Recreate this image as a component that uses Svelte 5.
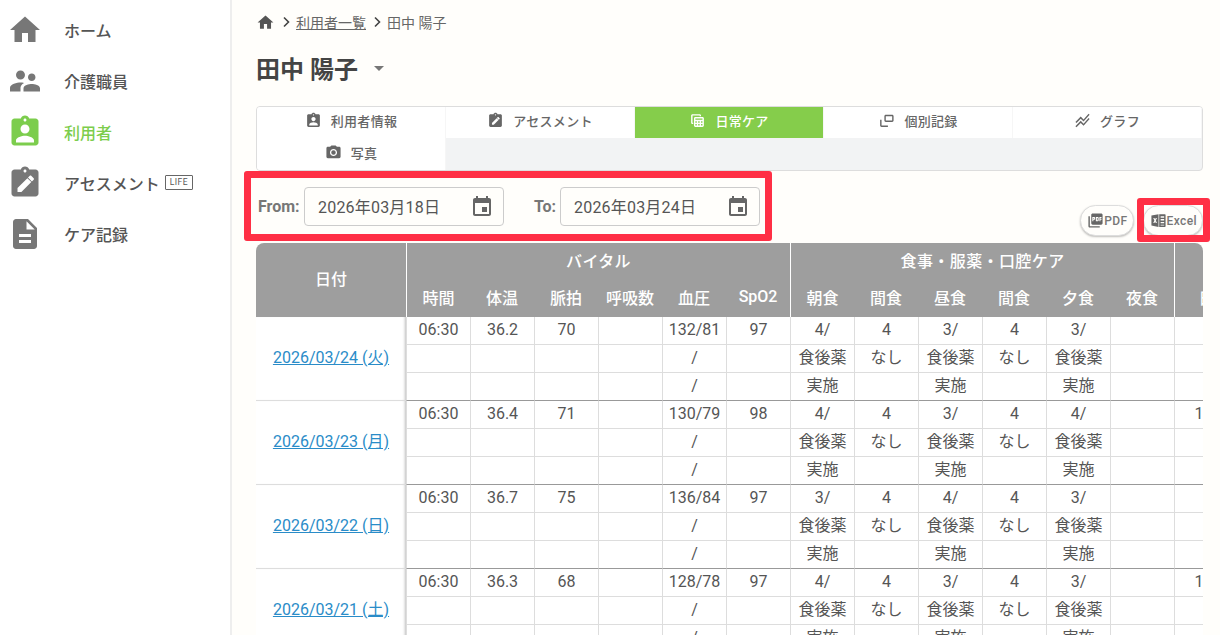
<script>
  const icons = {
    home: 'M10 20v-6h4v6h5v-8h3L12 3 2 12h3v8z',
    staff: 'M16.5 12c1.38 0 2.49-1.12 2.49-2.5S17.88 7 16.5 7C15.12 7 14 8.12 14 9.5s1.12 2.5 2.5 2.5zM9 11c1.66 0 2.99-1.34 2.99-3S10.66 5 9 5C7.34 5 6 6.34 6 8s1.34 3 3 3zm7.5 3c-1.83 0-5.5.92-5.5 2.75V19h11v-2.25c0-1.83-3.67-2.75-5.5-2.75zM9 13c-2.33 0-7 1.17-7 3.5V19h7v-2.25c0-.85.33-2.34 2.37-3.47C10.5 13.1 9.66 13 9 13z',
    user: 'M19 3h-4.18C14.4 1.84 13.3 1 12 1c-1.3 0-2.4.84-2.82 2H5c-1.1 0-2 .9-2 2v14c0 1.1.9 2 2 2h14c1.1 0 2-.9 2-2V5c0-1.1-.9-2-2-2zm-7 0c.55 0 1 .45 1 1s-.45 1-1 1-1-.45-1-1 .45-1 1-1zm0 4c1.66 0 3 1.34 3 3s-1.34 3-3 3-3-1.34-3-3 1.34-3 3-3zm6 12H6v-1.4c0-2 4-3.1 6-3.1s6 1.1 6 3.1V19z',
    assess: 'M19 3h-4.18C14.4 1.84 13.3 1 12 1s-2.4.84-2.82 2H5c-1.1 0-2 .9-2 2v14c0 1.1.9 2 2 2h14c1.1 0 2-.9 2-2V5c0-1.1-.9-2-2-2zm-7 0c.55 0 1 .45 1 1s-.45 1-1 1-1-.45-1-1 .45-1 1-1zM7 18v-2.6l6.6-6.6 2.6 2.6L9.6 18H7zm10.8-8.2-1.2 1.2-2.6-2.6 1.2-1.2c.26-.26.68-.26.94 0l1.66 1.66c.26.26.26.68 0 .94z',
    care: 'M14 2H6c-1.1 0-1.99.9-1.99 2L4 20c0 1.1.89 2 1.99 2H18c1.1 0 2-.9 2-2V8l-6-6zm2 16H8v-2h8v2zm0-4H8v-2h8v2zm-3-5V3.5L18.5 9H13z',
    event: 'M17 12h-5v5h5v-5zM16 1v2H8V1H6v2H5c-1.11 0-1.99.9-1.99 2L3 19c0 1.1.89 2 2 2h14c1.1 0 2-.9 2-2V5c0-1.1-.9-2-2-2h-1V1h-2zm3 18H5V8h14v11z',
    daily: 'M19 7H9c-1.1 0-2 .9-2 2v10c0 1.1.9 2 2 2h10c1.1 0 2-.9 2-2V9c0-1.1-.9-2-2-2zm0 2v2H9V9h10zm-6 6v-2h2v2h-2zm2 2v2h-2v-2h2zm-4-2H9v-2h2v2zm6-2h2v2h-2v-2zm-8 4h2v2H9v-2zm8 2v-2h2v2h-2zM6 17H5c-1.1 0-2-.9-2-2V5c0-1.1.9-2 2-2h10c1.1 0 2 .9 2 2v1h-2V5H5v10h1v2z',
    record: 'M11 4h9c1.1 0 2 .9 2 2v6c0 1.1-.9 2-2 2h-9c-1.1 0-2-.9-2-2V6c0-1.1.9-2 2-2zm0 2v6h9V6h-9zM3 11h2v8h9v2H5c-1.1 0-2-.9-2-2v-8z',
    graph: 'M2 19.99l7.5-7.51 4 4 7.09-7.97L22 9.92l-8.5 9.56-4-4-6 6.01-1.5-1.5zm1.5-4.5l6-6.01 4 4L22 3.92l-1.41-1.41-7.09 7.97-4-4L2 13.99l1.5 1.5z',
    photo: 'M9 2L7.17 4H4c-1.1 0-2 .9-2 2v12c0 1.1.9 2 2 2h16c1.1 0 2-.9 2-2V6c0-1.1-.9-2-2-2h-3.17L15 2H9zm3 15c-2.76 0-5-2.24-5-5s2.24-5 5-5 5 2.24 5 5-2.24 5-5 5zm0-8.2a3.2 3.2 0 1 0 0 6.4 3.2 3.2 0 0 0 0-6.4z',
    pdf: 'M20 2H8c-1.1 0-2 .9-2 2v12c0 1.1.9 2 2 2h12c1.1 0 2-.9 2-2V4c0-1.1-.9-2-2-2zm-8.5 7.5c0 .83-.67 1.5-1.5 1.5H9v2H7.5V7H10c.83 0 1.5.67 1.5 1.5v1zm5 2c0 .83-.67 1.5-1.5 1.5h-2.5V7H15c.83 0 1.5.67 1.5 1.5v3zm4-3H19v1h1.5V11H19v2h-1.5V7h3v1.5zM9 9.5h1v-1H9v1zM4 6H2v14c0 1.1.9 2 2 2h14v-2H4V6zm10 5.5h1v-3h-1v3z',
    excel: 'M13 3h8c.55 0 1 .45 1 1v16c0 .55-.45 1-1 1h-8V3zm2 3v2h5V6h-5zm0 4v2h5v-2h-5zm0 4v2h5v-2h-5zm0 4v1h5v-1h-5zM2 5l10-2v18L2 19V5zm2.6 3.4L6.2 12l-1.6 3.6h1.7l.9-2.3.9 2.3h1.7L8.2 12l1.6-3.6H8.1L7.2 10.6l-.9-2.2H4.6z'
  };

  const nav = [
    { label: 'ホーム', icon: 'home' },
    { label: '介護職員', icon: 'staff' },
    { label: '利用者', icon: 'user', active: true },
    { label: 'アセスメント', icon: 'assess', life: true },
    { label: 'ケア記録', icon: 'care' }
  ];

  const tabs = [
    { label: '利用者情報', icon: 'user' },
    { label: 'アセスメント', icon: 'assess' },
    { label: '日常ケア', icon: 'daily', active: true },
    { label: '個別記録', icon: 'record' },
    { label: 'グラフ', icon: 'graph' },
    { label: '写真', icon: 'photo' }
  ];

  const vitals = ['時間', '体温', '脈拍', '呼吸数', '血圧', 'SpO2'];
  const meals = ['朝食', '間食', '昼食', '間食', '夕食', '夜食'];

  const days = [
    { date: '2026/03/24 (火)', temp: '36.2', pulse: '70', bp: '132/81', spo2: '97', meal: ['4/', '4', '3/', '4', '3/'], extra: '' },
    { date: '2026/03/23 (月)', temp: '36.4', pulse: '71', bp: '130/79', spo2: '98', meal: ['4/', '4', '3/', '4', '4/'], extra: '100' },
    { date: '2026/03/22 (日)', temp: '36.7', pulse: '75', bp: '136/84', spo2: '97', meal: ['3/', '4', '4/', '4', '3/'], extra: '' },
    { date: '2026/03/21 (土)', temp: '36.3', pulse: '68', bp: '128/78', spo2: '97', meal: ['4/', '4', '3/', '4', '3/'], extra: '100' }
  ];

  const medicine = ['食後薬', 'なし', '食後薬', 'なし', '食後薬', ''];
  const oral = ['実施', '', '実施', '', '実施', ''];
</script>

<div class="layout">
  <nav class="sidebar">
    {#each nav as item}
      <div class="nav-item" class:active={item.active}>
        <svg class="nav-icon" viewBox="0 0 24 24"><path fill="currentColor" fill-rule="evenodd" d={icons[item.icon]} /></svg>
        <span>{item.label}</span>
        {#if item.life}<span class="life">LIFE</span>{/if}
      </div>
    {/each}
  </nav>

  <main class="main">
    <div class="crumbs">
      <svg class="crumb-home" viewBox="0 0 24 24"><path fill="currentColor" d={icons.home} /></svg>
      <svg class="chev" viewBox="0 0 10 12"><path d="M3 1.5 7.5 6 3 10.5" /></svg>
      <a href="#list">利用者一覧</a>
      <svg class="chev" viewBox="0 0 10 12"><path d="M3 1.5 7.5 6 3 10.5" /></svg>
      <span>田中 陽子</span>
    </div>

    <h1>田中 陽子<span class="caret"></span></h1>

    <div class="tabs">
      {#each tabs as tab}
        <div class="tab" class:active={tab.active}>
          <svg viewBox="0 0 24 24"><path fill="currentColor" fill-rule="evenodd" d={icons[tab.icon]} /></svg>
          <span>{tab.label}</span>
        </div>
      {/each}
    </div>

    <div class="toolbar">
      <div class="dates">
        <label for="from">From:</label>
        <div class="date-input" id="from">
          <span>2026年03月18日</span>
          <svg viewBox="0 0 24 24"><path fill="currentColor" d={icons.event} /></svg>
        </div>
        <label class="to" for="to">To:</label>
        <div class="date-input" id="to">
          <span>2026年03月24日</span>
          <svg viewBox="0 0 24 24"><path fill="currentColor" d={icons.event} /></svg>
        </div>
        <div class="marker"></div>
      </div>
      <div class="exports">
        <button>
          <svg viewBox="0 0 24 24"><path fill="currentColor" fill-rule="evenodd" d={icons.pdf} /></svg>PDF
        </button>
        <button>
          <svg viewBox="0 0 24 24"><path fill="currentColor" fill-rule="evenodd" d={icons.excel} /></svg>Excel
          <span class="marker"></span>
        </button>
      </div>
    </div>

    <div class="table-wrap">
      <table>
        <colgroup>
          <col class="date-col" />
          {#each Array(13) as _}<col class="num-col" />{/each}
        </colgroup>
        <thead>
          <tr>
            <th rowspan="2" class="date-head">日付</th>
            <th colspan="6" class="group">バイタル</th>
            <th colspan="6" class="group">食事・服薬・口腔ケア</th>
            <th class="group"></th>
          </tr>
          <tr>
            {#each vitals as v, i}<th class:edge={i === 0}>{v}</th>{/each}
            {#each meals as m, i}<th class:edge={i === 0}>{m}</th>{/each}
            <th class="edge">日</th>
          </tr>
        </thead>
        <tbody>
          {#each days as day}
            <tr class="first">
              <td rowspan="3" class="date"><a href="#day">{day.date}</a></td>
              <td>06:30</td><td>{day.temp}</td><td>{day.pulse}</td><td></td><td>{day.bp}</td><td>{day.spo2}</td>
              {#each day.meal as m}<td>{m}</td>{/each}
              <td></td>
              <td class="extra">{day.extra}</td>
            </tr>
            <tr>
              <td></td><td></td><td></td><td></td><td>/</td><td></td>
              {#each medicine as m}<td>{m}</td>{/each}
              <td></td>
            </tr>
            <tr>
              <td></td><td></td><td></td><td></td><td>/</td><td></td>
              {#each oral as m}<td>{m}</td>{/each}
              <td></td>
            </tr>
          {/each}
        </tbody>
      </table>
    </div>
  </main>
</div>

<style>
  :global(body) {
    background: #fffefb;
    color: #555;
    font-family: Roboto, "Noto Sans CJK JP", sans-serif;
    overflow: hidden;
  }

  .layout {
    display: flex;
    height: 635px;
    overflow: hidden;
  }

  .sidebar {
    width: 232px;
    flex: none;
    box-sizing: border-box;
    background: #fff;
    border-right: 2px solid #eeeeee;
    padding-top: 4px;
  }

  .nav-item {
    display: flex;
    align-items: center;
    height: 51px;
    padding-left: 7px;
    font-size: 16px;
    font-weight: 500;
    color: #555;
  }

  .nav-icon {
    width: 36px;
    height: 36px;
    margin-right: 21px;
    color: #777;
  }

  .nav-item.active,
  .nav-item.active .nav-icon {
    color: #7ccd4d;
  }

  .life {
    margin-left: 5px;
    padding: 0 4px;
    border: 1px solid #666;
    border-radius: 1px;
    font-size: 8.5px;
    font-weight: 400;
    line-height: 13px;
    letter-spacing: 0.5px;
  }

  .main {
    flex: 1;
    min-width: 0;
    padding: 0 17px 0 24px;
  }

  .crumbs {
    display: flex;
    align-items: center;
    height: 24px;
    margin-top: 10px;
    font-size: 14px;
    color: #666;
  }

  .crumbs a {
    color: #666;
  }

  .crumb-home {
    width: 19px;
    height: 19px;
    color: #555;
  }

  .chev {
    width: 10px;
    height: 12px;
    margin: 0 5px 0 6px;
    fill: none;
    stroke: #444;
    stroke-width: 1.6;
  }

  h1 {
    display: flex;
    align-items: center;
    height: 36px;
    margin: 15px 0 21px;
    font-size: 24px;
    font-weight: 700;
    color: #444;
  }

  .caret {
    margin: 2px 0 0 16px;
    border: 5px solid transparent;
    border-top-color: #777;
    border-bottom: 0;
  }

  .tabs {
    display: grid;
    grid-template-columns: repeat(5, 1fr);
    grid-template-rows: 31px 32px;
    box-sizing: border-box;
    height: 65px;
    background: #f2f3f4;
    border: 1px solid #ddd;
    border-radius: 4px;
    overflow: hidden;
  }

  .tab {
    display: flex;
    align-items: center;
    justify-content: center;
    gap: 9px;
    box-sizing: border-box;
    padding: 0 1px 4px 0;
    background: #fff;
    box-shadow: inset -1px 0 0 #f6f6f6;
    font-size: 13px;
    font-weight: 500;
    letter-spacing: 0.3px;
    color: #666;
  }

  .tab svg {
    width: 17px;
    height: 17px;
  }

  .tab.active {
    background: #85cd4b;
    color: #fff;
  }

  .toolbar {
    display: flex;
    justify-content: space-between;
    align-items: flex-end;
    height: 72px;
  }

  .dates {
    position: relative;
    display: flex;
    align-items: center;
    align-self: flex-start;
    margin: 16px 0 0 2px;
  }

  .dates label {
    width: 46px;
    padding-bottom: 1px;
    font-size: 16px;
    font-weight: 700;
    color: #777;
  }

  .dates label.to {
    width: 26px;
    margin-left: 30px;
  }

  .date-input {
    display: flex;
    align-items: center;
    justify-content: space-between;
    box-sizing: border-box;
    width: 200px;
    height: 39px;
    padding: 0 9px 0 13px;
    border: 1px solid #ccc;
    border-radius: 4px;
    font-size: 16px;
    color: #555;
  }

  .date-input span {
    padding-bottom: 2px;
    letter-spacing: 0.2px;
  }

  .date-input svg {
    width: 24px;
    height: 24px;
    color: #666;
  }

  .marker {
    position: absolute;
    top: -16px;
    left: -14px;
    right: -12px;
    bottom: -15px;
    border: 7px solid #ff2f45;
    border-radius: 3px;
    pointer-events: none;
  }

  .exports {
    display: flex;
    gap: 9px;
    margin-bottom: 7px;
  }

  .exports button {
    position: relative;
    display: flex;
    align-items: center;
    height: 31px;
    padding: 0 5px 0 6px;
    background: #fffefb;
    border: 1px solid #ddd;
    border-radius: 16px;
    box-shadow: 0 1px 2px rgba(0, 0, 0, 0.25);
    font-family: inherit;
    font-size: 12px;
    font-weight: 500;
    letter-spacing: 0.4px;
    color: #777;
  }

  .exports svg {
    width: 17px;
    height: 17px;
    color: #666;
  }

  .exports .marker {
    top: -8px;
    left: -7px;
    right: -8px;
    bottom: -7px;
  }

  .table-wrap {
    overflow: hidden;
    border-radius: 8px 8px 0 0;
  }

  table {
    table-layout: fixed;
    width: 982px;
    border-collapse: separate;
    border-spacing: 0;
    font-size: 16px;
  }

  .date-col {
    width: 150px;
  }

  .num-col {
    width: 64px;
  }

  th {
    height: 37px;
    box-sizing: border-box;
    padding: 0 0 4px;
    background: #9e9e9e;
    color: #fff;
    font-weight: 500;
    font-size: 16px;
    white-space: nowrap;
  }

  th.group {
    letter-spacing: 0.4px;
  }

  th.group,
  th.edge {
    border-left: 1px solid #fff;
  }

  td {
    height: 28px;
    box-sizing: border-box;
    padding: 0 0 2px;
    background: #fff;
    border-left: 1px solid #ddd;
    border-bottom: 1px solid #ddd;
    text-align: center;
    color: #555;
    line-height: 24px;
    white-space: nowrap;
    overflow: hidden;
  }

  td.extra {
    padding-left: 3px;
  }

  tbody tr:nth-child(3n) td {
    border-bottom-color: #999;
  }

  td.date {
    border-left: 0;
    border-bottom-color: #ddd;
    box-shadow: inset -3px 0 3px -2px #bbb;
  }

  td.date a {
    color: #2a8cc8;
  }
</style>
